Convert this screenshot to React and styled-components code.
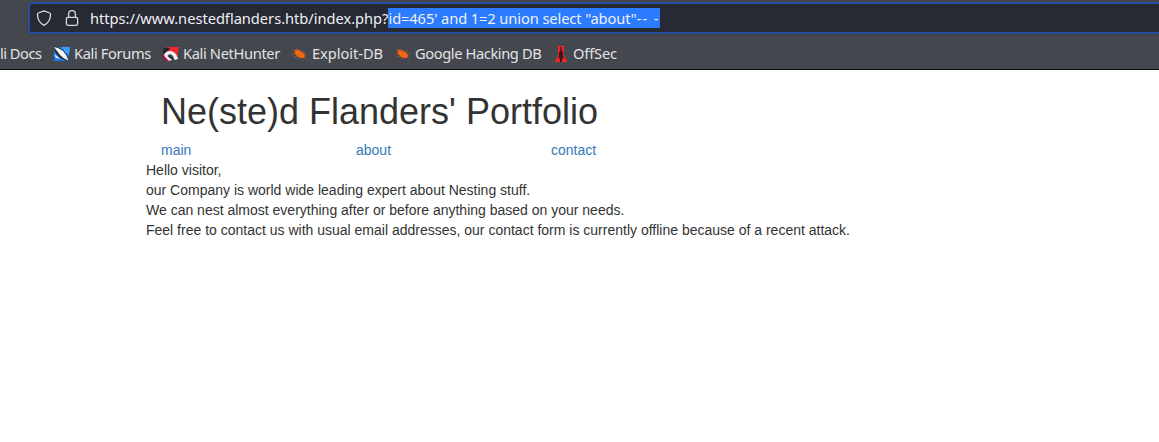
import React from "react";
import styled, { createGlobalStyle } from "styled-components";

const GlobalStyle = createGlobalStyle`
  * { box-sizing: border-box; }
  body { margin: 0; background: #fff; overflow: hidden; }
`;

const Chrome = styled.header`
  height: 70px;
  padding-top: 2px;
  background: #44474d;
  border-bottom: 1px solid #0c0c0d;
  font-family: "Noto Sans", sans-serif;
  font-size: 14.67px;
  overflow: hidden;
`;

const AddressBar = styled.div`
  display: flex;
  align-items: center;
  height: 32px;
  margin: 0 -10px 0 28px;
  padding-left: 6px;
  background: #272935;
  border: 2px solid #264f9d;
  border-radius: 4px;
  box-shadow: 0 1px 3px rgba(40, 40, 40, 0.4);
  color: #f0f0f4;
  white-space: pre;
`;

const AddressIcon = styled.svg`
  width: 16px;
  height: 16px;
  flex: none;
  margin-right: 12px;
  fill: none;
  stroke: #d9d9de;
  stroke-width: 1.3;
  stroke-linejoin: round;
`;

const Url = styled.span`
  margin-left: -2px;
  line-height: 20px;
  letter-spacing: -0.025px;
`;

const Selected = styled.span`
  display: inline-block;
  height: 20px;
  background: #2a7bfd;
  letter-spacing: ${(p) => p.$tracking}px;
`;

const Bookmarks = styled.nav`
  display: flex;
  align-items: center;
  gap: 12px;
  height: 20px;
  margin-top: 10px;
  color: #e2e3e4;
  white-space: nowrap;
`;

const Bookmark = styled.div`
  display: flex;
  align-items: center;
  gap: 4px;
  flex: none;
  width: ${(p) => p.$width}px;
`;

const Label = styled.span`
  line-height: 20px;
  padding-bottom: 2px;
  letter-spacing: ${(p) => p.$tracking}px;
`;

const Favicon = styled.svg`
  width: 16px;
  height: 16px;
  flex: none;
`;

const Page = styled.main`
  width: 1170px;
  padding: 22px 0 0 146px;
  font: 14px/20px "Liberation Sans", Arial, sans-serif;
  color: #333;
`;

const Title = styled.h1`
  margin: 0 0 8px;
  padding-left: 15px;
  font-size: 36px;
  font-weight: 500;
  line-height: 40px;
`;

const Menu = styled.nav`
  display: flex;
`;

const MenuLink = styled.a`
  width: 195px;
  padding-left: 15px;
  color: #337ab7;
  text-decoration: none;
`;

const Copy = styled.p`
  margin: 0;
  white-space: nowrap;
`;

const ShieldIcon = () => (
  <AddressIcon viewBox="0 0 16 16">
    <path d="M8 .9 L13.7 3 Q14.5 3.3 14.5 4.2 C14.6 8.8 12.5 13 8 15.3 C3.5 13 1.4 8.8 1.5 4.2 Q1.5 3.3 2.3 3 Z" />
  </AddressIcon>
);

const LockIcon = () => (
  <AddressIcon viewBox="0 0 16 16">
    <rect x="2.4" y="7.3" width="11.2" height="8" rx="1.6" />
    <path d="M4.6 7.3 V4.1 A3.4 3.4 0 0 1 11.4 4.1 V7.3" />
  </AddressIcon>
);

const ForumsIcon = () => (
  <Favicon viewBox="0 0 16 16">
    <path d="M0 1 H16 L14 15 H0Z" fill="#1f78ee" />
    <path d="M8 1 H16 L15 8 L11 7Z" fill="#3d9cff" />
    <path d="M0 0 L4 1 L10 5 L13 9 L15 15 L10 14 L5 11 L1 6Z" fill="#242930" />
    <path d="M0 1 L4 2 L9 5 L12 9 L14.5 14.5 L10 12.5 L6 9 L3 5Z" fill="#f6f7f8" />
    <path d="M0 8 L3 10 L6 13 L2 12Z" fill="#d8e8fa" />
  </Favicon>
);

const NetHunterIcon = () => (
  <Favicon viewBox="0 0 16 16">
    <path d="M4 1 H16 L14 13 L9 8 L4 7Z" fill="#ed292d" />
    <path d="M1 2 L7 2 L4 6 L1 9 L0 6Z" fill="#242529" />
    <path d="M1 9 C3 3 13 3 15 13 L11.5 14 C10.5 8 6 7 4.5 10 L9 14 L5 15 Q1 13 1 9Z" fill="#f6f1f2" />
    <path d="M5 10 Q8 8.5 10.5 13.5 L7 12Z" fill="#272b30" />
    <path d="M0 7 L2 11 L6 14.8 H2 L0 12Z" fill="#b30c3c" />
  </Favicon>
);

const BugIcon = () => (
  <Favicon viewBox="0 0 16 16">
    <path d="M2.5 4.5 L5 3.5 L8 5 L11 6.5 L13 9 L12.3 12 L9 12 L6 11 L3 8Z" fill="#f26511" />
    <path d="M1 3 L4 5 M5 2.5 L6 5 M8 3 V5 M10 6 L13 5 M11 8 L15 8 M12 10 L14 13 M8 11 L6 13 M5 10 L2 11 M3 8 L0 8" fill="none" stroke="#b95a30" strokeWidth=".7" />
  </Favicon>
);

const OffSecIcon = () => (
  <Favicon viewBox="0 0 16 16">
    <path d="M5 0 H11 V9 L14.5 16 H1.5 L5 9Z" fill="#ef2328" />
    <path d="M7.3 1 H8.7 V5 L10 6 V10 L11 13 L9 12 V16 H7 V12 L5 13 L6 10 V6 L7.3 5Z" fill="#36191e" />
  </Favicon>
);

const bookmarks = [
  { label: "Kali Forums", Icon: ForumsIcon, width: 97, tracking: -0.36 },
  { label: "Kali NetHunter", Icon: NetHunterIcon, width: 117, tracking: -0.36 },
  { label: "Exploit-DB", Icon: BugIcon, width: 91, tracking: -0.05 },
  { label: "Google Hacking DB", Icon: BugIcon, width: 146, tracking: -0.4 },
  { label: "OffSec", Icon: OffSecIcon, width: 64, tracking: -0.15 },
];

export default function App() {
  return (
    <>
      <GlobalStyle />
      <Chrome>
        <AddressBar>
          <ShieldIcon />
          <LockIcon />
          <Url>
            https://www.nestedflanders.htb/index.php?
            <Selected $tracking={-0.1}>id=465' and 1=2 union select "about"</Selected>
            <Selected $tracking={1.3}>-- -</Selected>
          </Url>
        </AddressBar>
        <Bookmarks>
          <Bookmark $width={42}>
            <Label $tracking={-0.5}>li Docs</Label>
          </Bookmark>
          {bookmarks.map(({ label, Icon, width, tracking }) => (
            <Bookmark key={label} $width={width}>
              <Icon />
              <Label $tracking={tracking}>{label}</Label>
            </Bookmark>
          ))}
        </Bookmarks>
      </Chrome>
      <Page>
        <Title>Ne(ste)d Flanders' Portfolio</Title>
        <Menu>
          <MenuLink>main</MenuLink>
          <MenuLink>about</MenuLink>
          <MenuLink>contact</MenuLink>
        </Menu>
        <Copy>Hello visitor,</Copy>
        <Copy>our Company is world wide leading expert about Nesting stuff.</Copy>
        <Copy>We can nest almost everything after or before anything based on your needs.</Copy>
        <Copy>Feel free to contact us with usual email addresses, our contact form is currently offline because of a recent attack.</Copy>
      </Page>
    </>
  );
}
